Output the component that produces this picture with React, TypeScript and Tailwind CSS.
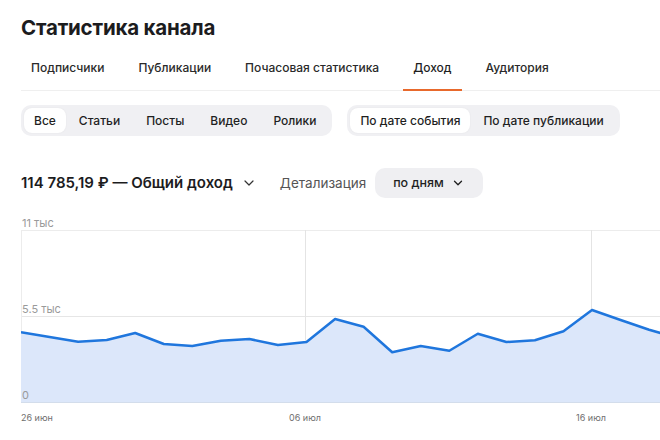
import { ChevronDown } from "lucide-react";

const TABS = ["Подписчики", "Публикации", "Почасовая статистика", "Доход", "Аудитория"];
const TYPES = ["Все", "Статьи", "Посты", "Видео", "Ролики"];
const DATES = ["По дате события", "По дате публикации"];

// доход по дням, начиная с 26 июня
const INCOME = [
  4458, 4157, 3856, 3965, 4413, 3709, 3581, 3920, 4029, 3645, 3837, 5308,
  4816, 3178, 3581, 3281, 4368, 3837, 3946, 4522, 5884, 5244, 4624, 4093,
];

const MAX = 11000;
const STEP = 28.55;
const TOP = 16;
const H = 172;
const W = 639;

function Segmented({ items, active }: { items: string[]; active: number }) {
  return (
    <div className="flex items-center rounded-[10px] bg-[#f0f0f3] p-[3px]">
      {items.map((t, i) => (
        <div
          key={t}
          className={
            i === active
              ? "rounded-[8px] bg-white px-[10px] py-[4px] text-[12px] leading-[17px] font-medium text-[#1f1f1f] shadow-[0_0_2px_rgba(0,0,0,0.06)]"
              : "rounded-[8px] px-[13px] py-[4px] text-[12px] leading-[17px] font-medium text-[#1f1f1f]"
          }
        >
          {t}
        </div>
      ))}
    </div>
  );
}

function IncomeChart() {
  const y = (v: number) => TOP + (1 - v / MAX) * H;
  const pts = INCOME.map((v, i) => `${(i * STEP).toFixed(1)},${y(v).toFixed(1)}`);
  const line = "M" + pts.join(" L");
  const lastX = ((INCOME.length - 1) * STEP).toFixed(1);
  const area = `${line} L${lastX},${TOP + H} L0,${TOP + H} Z`;

  return (
    <svg width={W} height={215} className="block">
      <line x1={0} y1={TOP + 0.5} x2={W} y2={TOP + 0.5} stroke="#ececec" />
      <line x1={0} y1={TOP + H / 2 + 0.5} x2={W} y2={TOP + H / 2 + 0.5} stroke="#e6e6e6" />
      <line x1={0.5} y1={TOP} x2={0.5} y2={TOP + H} stroke="#ececec" />
      <line x1={284.5} y1={TOP} x2={284.5} y2={TOP + H} stroke="#e4e4e4" />
      <line x1={570.5} y1={TOP} x2={570.5} y2={TOP + H} stroke="#e4e4e4" />
      <path d={area} fill="#dce7fa" />
      <line x1={0} y1={TOP + H + 0.5} x2={W} y2={TOP + H + 0.5} stroke="#d3ddeb" />
      <path d={line} fill="none" stroke="#1f76dd" strokeWidth={2.5} strokeLinejoin="round" />

      <g fontSize={11} fill="#9a9a9a" fontFamily="Inter, 'Liberation Sans', sans-serif">
        <text x={1} y={13}>11 тыс</text>
        <text x={1} y={99}>5.5 тыс</text>
        <text x={1} y={185}>0</text>
      </g>
      <g fontSize={9} fill="#6f6f6f" fontFamily="Inter, 'Liberation Sans', sans-serif">
        <text x={0} y={207}>26 июн</text>
        <text x={284} y={207} textAnchor="middle">06 июл</text>
        <text x={570} y={207} textAnchor="middle">16 июл</text>
      </g>
    </svg>
  );
}

export default function App() {
  return (
    <div className="h-[440px] w-[660px] overflow-hidden bg-white pl-[21px] font-['Inter','Liberation_Sans',sans-serif] text-[#1f1f1f]">
      <h1 className="pt-[15px] text-[20.5px] leading-[25px] font-bold tracking-[-0.2px] text-[#1c1c1e]">
        Статистика канала
      </h1>

      <div className="mt-[19px] flex gap-[14px] border-b border-[#efefef]">
        {TABS.map((t) => (
          <div
            key={t}
            className={
              t === "Доход"
                ? "-mb-px border-b-2 border-[#e8692c] px-[10px] pb-[13px] text-[12px] leading-[17px] font-medium text-[#1f1f1f]"
                : "-mb-px border-b-2 border-transparent px-[10px] pb-[13px] text-[12px] leading-[17px] font-medium text-[#2a2a2a]"
            }
          >
            {t}
          </div>
        ))}
      </div>

      <div className="mt-[14px] flex gap-[15px]">
        <Segmented items={TYPES} active={0} />
        <Segmented items={DATES} active={0} />
      </div>

      <div className="mt-[32px] flex items-center">
        <div className="text-[15px] font-semibold text-[#1c1c1e]">114 785,19 ₽ — Общий доход</div>
        <ChevronDown className="ml-[8px] h-[16px] w-[16px] text-[#333]" strokeWidth={1.8} />
        <div className="ml-[23px] text-[13.5px] text-[#555]">Детализация</div>
        <div className="ml-[9px] flex h-[30px] items-center rounded-[10px] bg-[#efeff2] px-[18px] text-[12.5px] font-medium">
          по дням
          <ChevronDown className="ml-[7px] h-[14px] w-[14px]" strokeWidth={2.2} />
        </div>
      </div>

      <div className="mt-[16px]">
        <IncomeChart />
      </div>
    </div>
  );
}
